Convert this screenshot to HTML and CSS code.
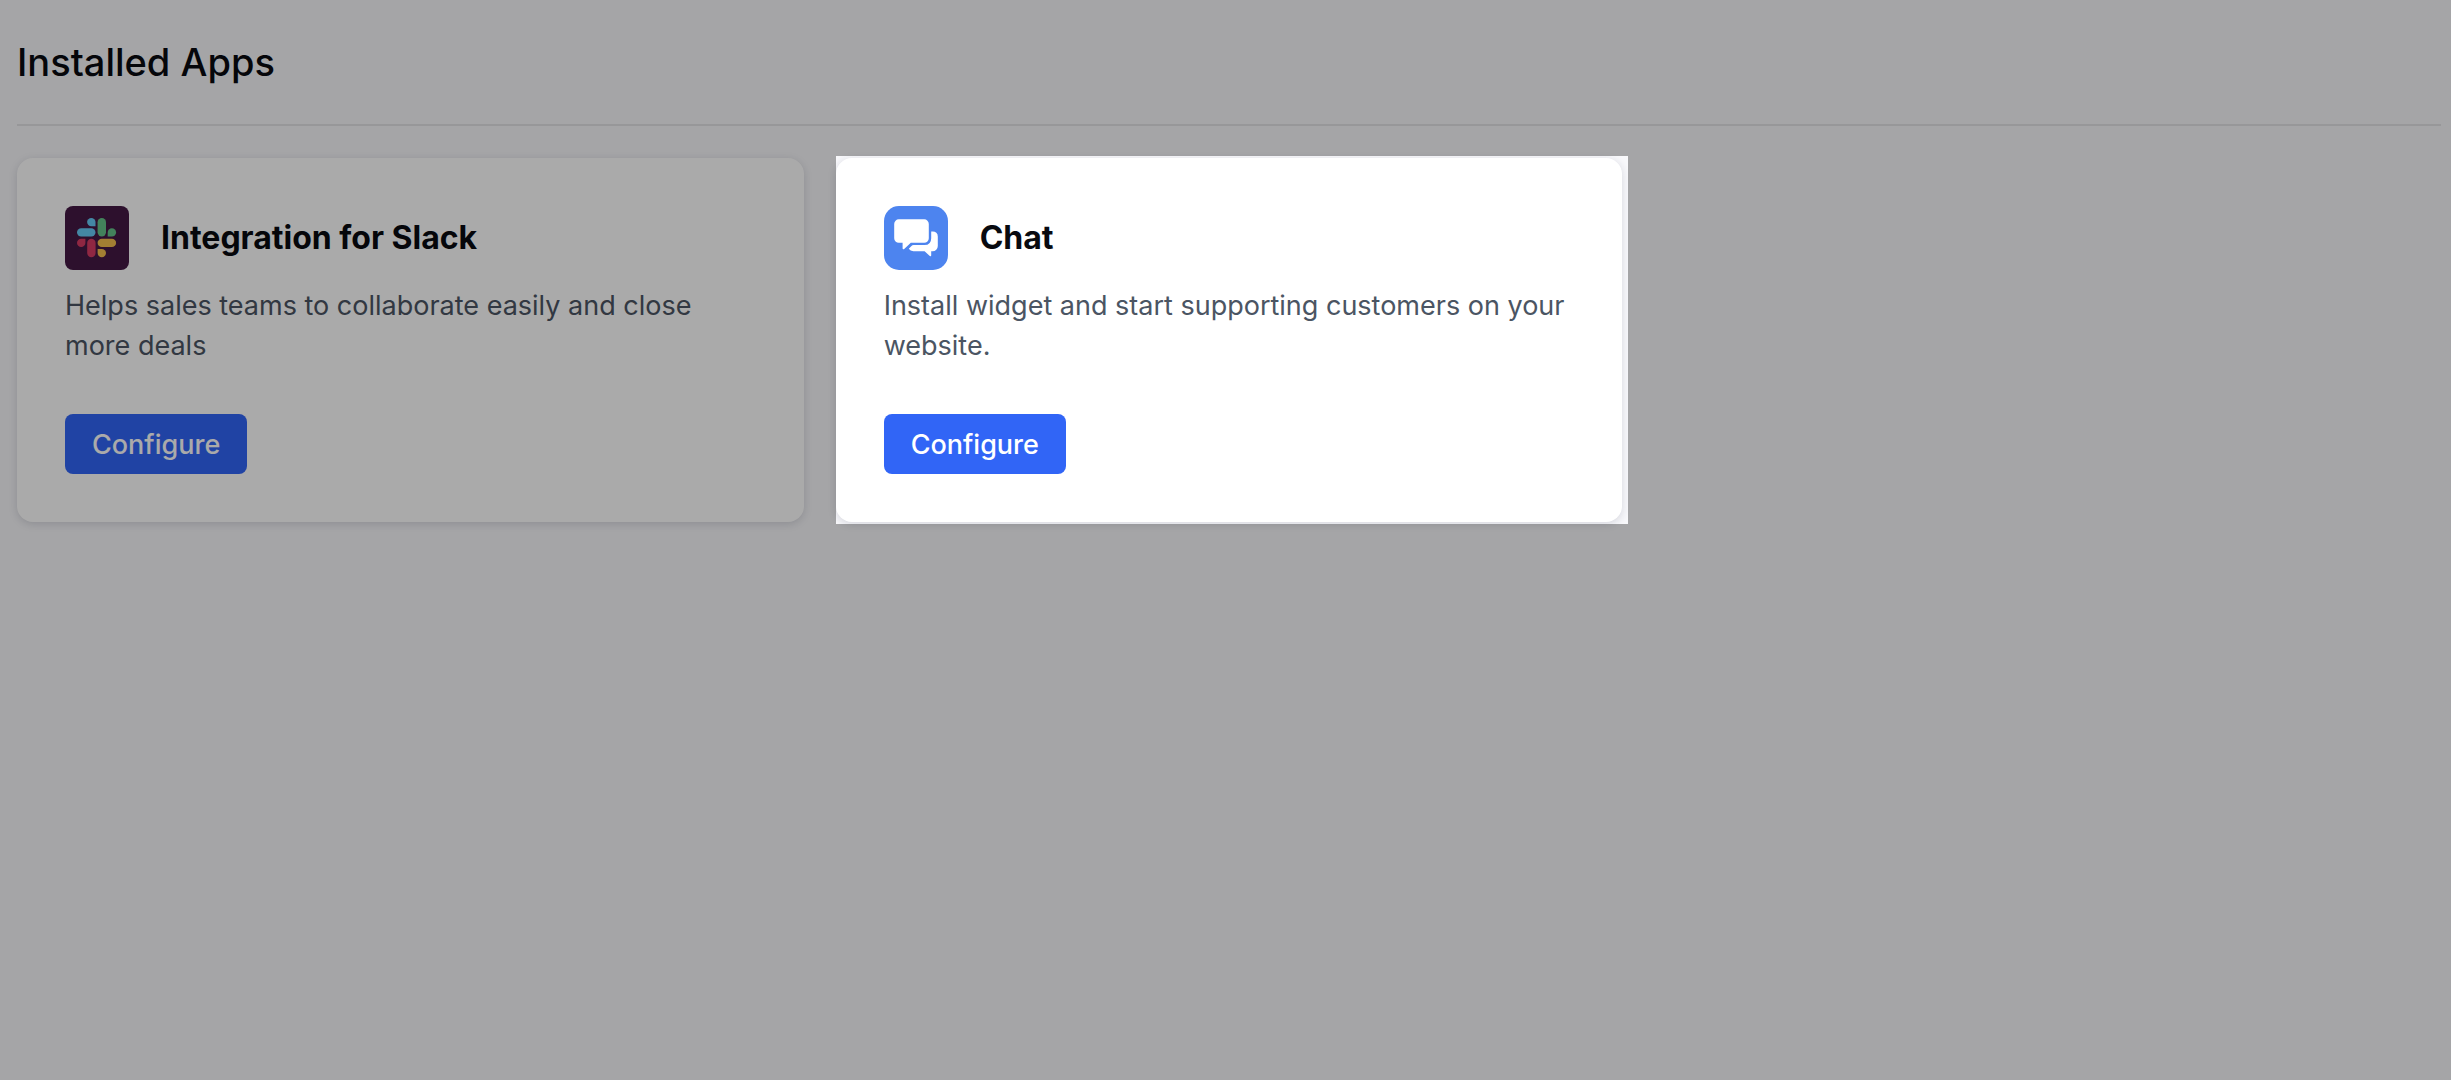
FILE: index.html
```html
<!DOCTYPE html>
<html lang="en">
<head>
  <meta charset="utf-8">
  <meta name="viewport" content="width=device-width, initial-scale=1">
  <title>Installed Apps</title>
  <link rel="stylesheet" href="styles.css">
</head>
<body>
  <main class="page">
    <header class="page-header">
      <h1 class="page-title">Installed Apps</h1>
    </header>
    <section class="app-grid" aria-label="Installed apps">
      <article class="card">
        <div class="card-head">
          <svg class="app-icon" viewBox="0 0 64 64" aria-hidden="true">
            <rect width="64" height="64" rx="8" fill="#441844"/>
            <g fill="#66cbf7">
              <path d="M30.5 20.3h-4.2a4.2 4.2 0 1 1 4.2-4.2z"/>
              <rect x="12" y="22.2" width="18.5" height="8.4" rx="4.2"/>
            </g>
            <g fill="#65c389">
              <rect x="32.6" y="12" width="8.4" height="18.5" rx="4.2"/>
              <path d="M42.7 30.6v-4.2a4.2 4.2 0 1 1 4.2 4.2z"/>
            </g>
            <g fill="#d73b63">
              <path d="M20.4 32.7v4.2a4.2 4.2 0 1 1-4.2-4.2z"/>
              <rect x="22.2" y="32.7" width="8.4" height="18.5" rx="4.2"/>
            </g>
            <g fill="#f3bf4d">
              <rect x="32.6" y="32.7" width="18.5" height="8.4" rx="4.2"/>
              <path d="M32.6 42.9h4.2a4.2 4.2 0 1 1-4.2 4.2z"/>
            </g>
          </svg>
          <h2 class="card-title">Integration for Slack</h2>
        </div>
        <p class="card-text">Helps sales teams to collaborate easily and close more deals</p>
        <button class="button" type="button">Configure</button>
      </article>
      <article class="card">
        <div class="card-head">
          <svg class="app-icon" viewBox="0 0 64 64" aria-hidden="true">
            <rect width="64" height="64" rx="15" fill="#4d84ef"/>
            <g fill="#fff">
              <path d="M14.8 13.3h25.4a4.6 4.6 0 0 1 4.6 4.6v14.3a4.6 4.6 0 0 1-4.6 4.6H26.8l-6.6 6.2q-1.6 1-1.6-.8v-5.4h-3.8a4.6 4.6 0 0 1-4.6-4.6V17.9a4.6 4.6 0 0 1 4.6-4.6z"/>
              <path d="M47.2 25.4h1.6a5 5 0 0 1 5 5V40a5.2 5.2 0 0 1-5.2 5.2h-1.4v4.4q-.3 1.3-1.4.4L40.6 45.2H29.4q-3.2 0-4.6-2.4l2.4-2.6q1-1.1 2.6-1.1h10.6q6.8 0 6.8-6.8z"/>
            </g>
          </svg>
          <h2 class="card-title">Chat</h2>
        </div>
        <p class="card-text">Install widget and start supporting customers on your website.</p>
        <button class="button" type="button">Configure</button>
        <div class="spotlight"></div>
      </article>
    </section>
  </main>
</body>
</html>
```

FILE: styles.css
```css
* {
  box-sizing: border-box;
}

body {
  margin: 0;
  background: #f8f8fb;
  color: #080a10;
  font-family: Inter, "Liberation Sans", sans-serif;
}

.page {
  min-height: 100vh;
  padding: 0 10px 32px 17px;
  overflow: hidden;
}

.page-header {
  padding: 38px 0;
  margin-bottom: 32px;
  border-bottom: 2px solid #e3e3e6;
}

.page-title {
  margin: 0;
  font-size: 38px;
  font-weight: 500;
  line-height: 48px;
}

.app-grid {
  display: grid;
  grid-template-columns: repeat(3, 1fr);
  gap: 32px;
}

.card {
  position: relative;
  padding: 48px;
  border-radius: 16px;
  background: #fff;
  box-shadow: 0 2px 8px rgba(30, 35, 60, 0.16);
}

.card-head {
  display: flex;
  align-items: center;
  gap: 32px;
  margin-bottom: 16px;
}

.app-icon {
  flex: none;
  width: 64px;
  height: 64px;
}

.card-title {
  margin: 0;
  font-size: 32px;
  font-weight: 700;
  line-height: 40px;
}

.card-text {
  margin: 0 0 48px;
  color: #4b5563;
  font-size: 27px;
  line-height: 40px;
}

.button {
  display: block;
  height: 60px;
  padding: 0 27px;
  border: 0;
  border-radius: 8px;
  background: #3165f6;
  color: #fff;
  font-family: inherit;
  font-size: 27px;
  font-weight: 500;
  cursor: pointer;
}

/* Dims the whole page except the card it sits on. */
.spotlight {
  position: absolute;
  inset: -2px -6px -2px 0;
  box-shadow: 0 0 0 200vmax rgba(0, 0, 0, 0.333);
  pointer-events: none;
}
```
